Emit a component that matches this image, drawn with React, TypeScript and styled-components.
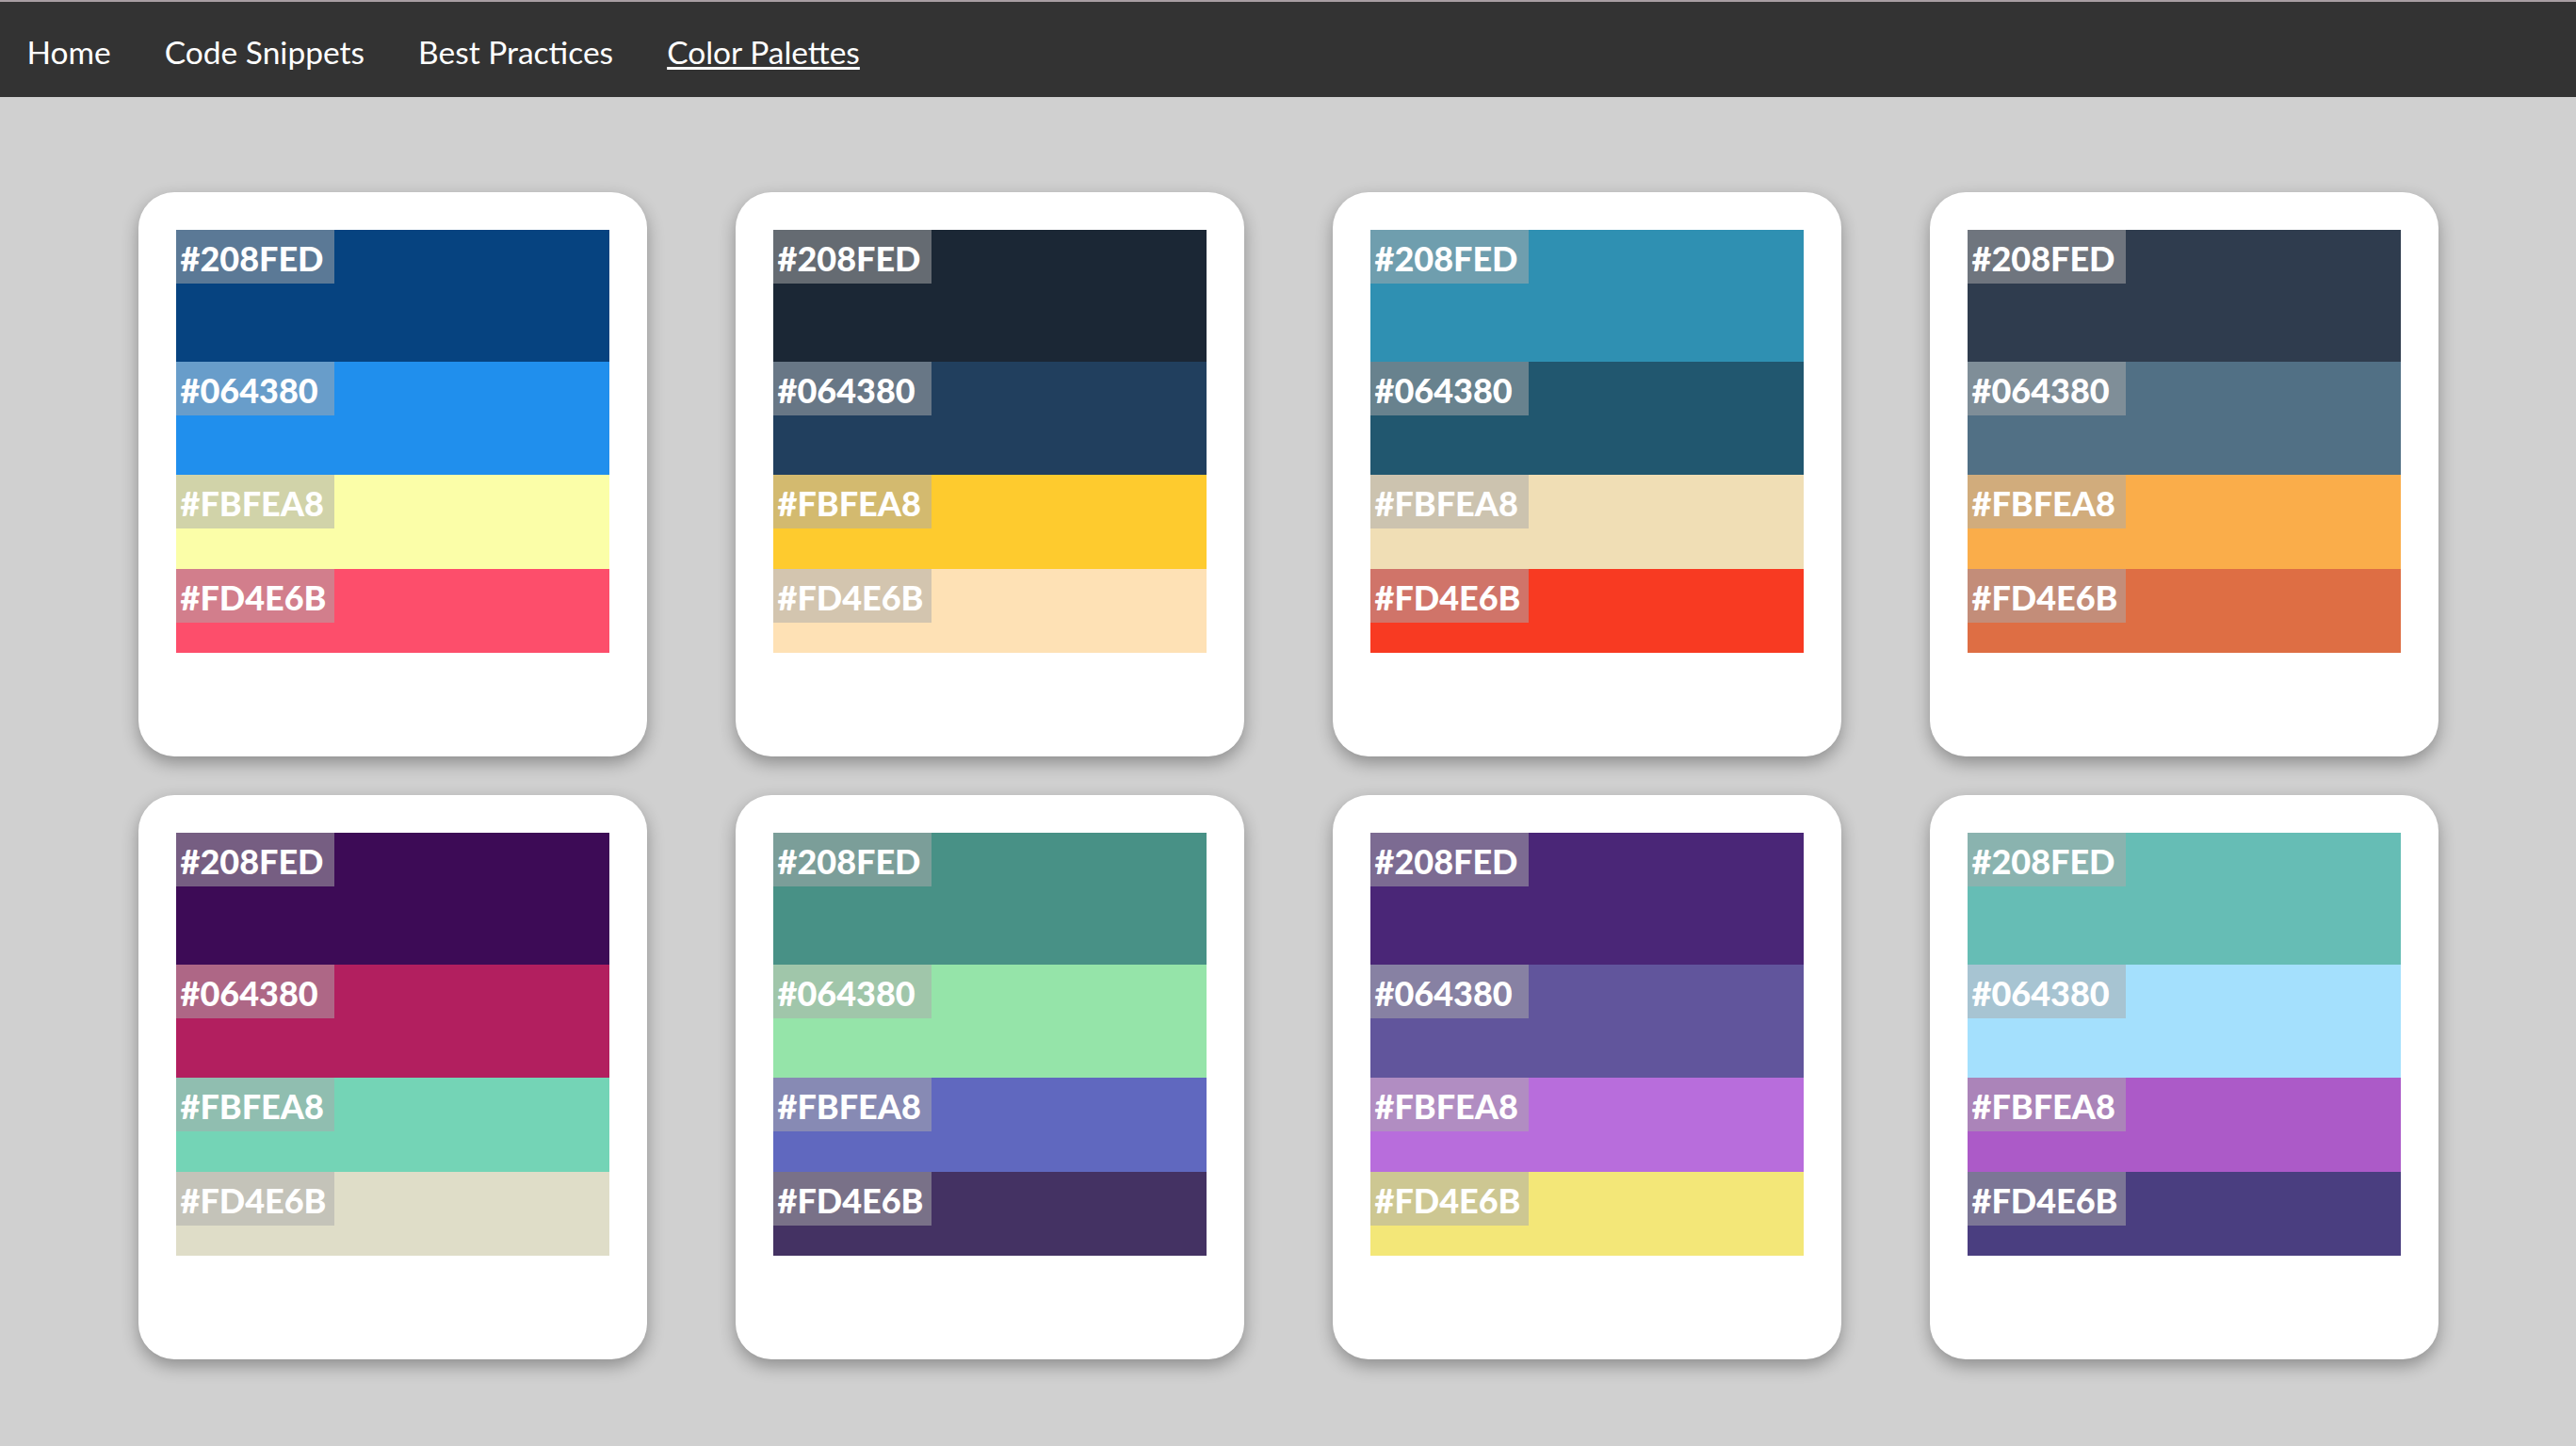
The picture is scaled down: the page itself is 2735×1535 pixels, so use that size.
import React from "react";
import styled, { createGlobalStyle } from "styled-components";

const GlobalStyle = createGlobalStyle`
  html, body {
    margin: 0;
    padding: 0;
    background: #d0d0d0;
  }
  body {
    border-top: 2px solid #a89ea3;
    font-family: "Lato", "Open Sans", sans-serif;
  }
`;

const NavBar = styled.nav`
  display: flex;
  align-items: center;
  height: 101px;
  padding-top: 6px;
  box-sizing: border-box;
  background: #333333;
`;

const NavLink = styled.a<{ $active?: boolean }>`
  font-family: "Lato", "Open Sans", sans-serif;
  font-size: 33.5px;
  color: #ffffff;
  padding: 0 28.5px;
  text-decoration: ${(p) => (p.$active ? "underline" : "none")};
  text-decoration-thickness: 3px;
  text-underline-offset: 3px;
  cursor: pointer;
  line-height: 1;
`;

const Grid = styled.main`
  display: flex;
  flex-wrap: wrap;
  justify-content: center;
  column-gap: 94px;
  row-gap: 41px;
  padding: 101px 0 60px;
`;

const Card = styled.div`
  width: 540px;
  height: 599px;
  box-sizing: border-box;
  padding: 40px;
  background: #ffffff;
  border-radius: 38px;
  box-shadow: 0 7px 18px rgba(0, 0, 0, 0.32);
`;

const Palette = styled.div`
  display: flex;
  flex-direction: column;
  width: 460px;
`;

const Stripe = styled.div<{ $color: string; $h: number }>`
  height: ${(p) => p.$h}px;
  background: ${(p) => p.$color};
`;

const Label = styled.span`
  display: block;
  width: 168px;
  height: 57px;
  box-sizing: border-box;
  padding-left: 5px;
  background: rgba(170, 170, 170, 0.52);
  color: #ffffff;
  font-family: "Lato", "Open Sans", sans-serif;
  font-weight: 900;
  font-size: 36px;
  line-height: 61px;
  white-space: nowrap;
  overflow: hidden;
`;

const labels = ["#208FED", "#064380", "#FBFEA8", "#FD4E6B"];
const heights = [140, 120, 100, 89];

const palettes: string[][] = [
  ["#064380", "#208FED", "#FBFEA8", "#FD4E6B"],
  ["#1b2735", "#213f5e", "#fecb2e", "#fee1b5"],
  ["#2f90b2", "#21576f", "#f0deb5", "#f83a22"],
  ["#2f3c4e", "#517085", "#faad4a", "#de6e44"],
  ["#3d0b56", "#b21f5f", "#74d4b6", "#dfddc8"],
  ["#489186", "#95e4a9", "#6068bf", "#443263"],
  ["#4a2677", "#61559c", "#b86ddc", "#f3e778"],
  ["#66bdb5", "#a4e0fd", "#ac5ac8", "#4a3e80"],
];

export default function App() {
  return (
    <>
      <GlobalStyle />
      <NavBar>
        <NavLink>Home</NavLink>
        <NavLink>Code Snippets</NavLink>
        <NavLink>Best Practices</NavLink>
        <NavLink $active>Color Palettes</NavLink>
      </NavBar>
      <Grid>
        {palettes.map((colors, i) => (
          <Card key={i}>
            <Palette>
              {colors.map((c, j) => (
                <Stripe key={j} $color={c} $h={heights[j]}>
                  <Label>{labels[j]}</Label>
                </Stripe>
              ))}
            </Palette>
          </Card>
        ))}
      </Grid>
    </>
  );
}
